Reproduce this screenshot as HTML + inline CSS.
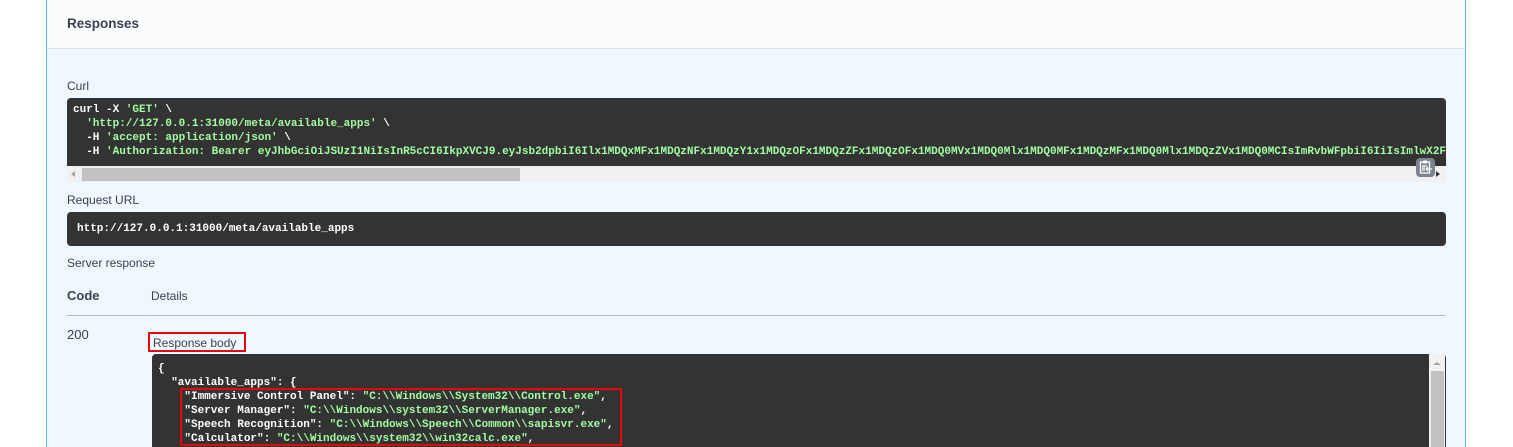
<!DOCTYPE html>
<html><head><meta charset="utf-8"><style>
*{box-sizing:border-box;margin:0;padding:0}
body{width:1513px;height:447px;overflow:hidden;background:#fff;font-family:"Liberation Sans",Arial,sans-serif;color:#3b4151;position:relative}
.panel{position:absolute;left:46px;top:0;width:1420px;height:447px;background:#eff7ff;border-left:1px solid #61affe;border-right:1px solid #61affe}
.hdr{position:absolute;left:0;top:0;right:0;height:49px;background:#fafcfe;border-bottom:1px solid #dde3ea}
.abs{position:absolute}
.lbl{font-size:12px;color:#3b4151}
.code{font-family:"Liberation Mono",monospace;font-size:11px;font-weight:bold;line-height:14px;color:#fff;white-space:pre}
.g{color:#a2fca2}
.dark{background:#333}
</style></head><body>
<div class="panel">
 <div class="hdr"><div class="abs" style="left:20px;top:16px;font-size:13.5px;font-weight:bold;color:#3b4151">Responses</div></div>
 <div class="abs lbl" style="left:20px;top:79px">Curl</div>
 <div class="abs dark" style="left:20px;top:98px;width:1379px;height:68px;border-radius:4px 4px 0 0;overflow:hidden">
  <div class="code abs" style="left:6px;top:5px">curl -X <span class="g">'GET'</span> \
  <span class="g">'http://127.0.0.1:31000/meta/available_apps'</span> \
  -H <span class="g">'accept: application/json'</span> \
  -H <span class="g">'Authorization: Bearer eyJhbGciOiJSUzI1NiIsInR5cCI6IkpXVCJ9.eyJsb2dpbiI6Ilx1MDQxMFx1MDQzNFx1MDQzY1x1MDQzOFx1MDQzZFx1MDQzOFx1MDQ0MVx1MDQ0Mlx1MDQ0MFx1MDQzMFx1MDQ0Mlx1MDQzZVx1MDQ0MCIsImRvbWFpbiI6IiIsImlwX2F'</span></div>
 </div>
 <div class="abs" style="left:20px;top:166px;width:1379px;height:16px;background:#f1f1f1">
  <div class="abs" style="left:4px;top:5px;width:0;height:0;border-top:3px solid transparent;border-bottom:3px solid transparent;border-right:4px solid #a3a3a3"></div>
  <div class="abs" style="left:15px;top:2px;width:438px;height:13px;background:#c1c1c1"></div>
 </div>
 <div class="abs" style="left:1369px;top:158px;width:19px;height:19px;background:#7d8293;border-radius:4px">
  <svg width="19" height="19" viewBox="0 0 19 19"><rect x="4.5" y="4" width="9" height="11" fill="none" stroke="#fff" stroke-width="1.3"/><rect x="7" y="2.5" width="4" height="3" fill="#fff"/><path d="M6 8h5M6 10h3M6 12h3M10 11h6M12 9l-2 2 2 2" stroke="#fff" stroke-width="1.2" fill="none"/></svg>
 </div>
 <div class="abs" style="left:1389px;top:171px;width:0;height:0;border-top:3px solid transparent;border-bottom:3px solid transparent;border-left:4px solid #333"></div>
 <div class="abs lbl" style="left:20px;top:193px">Request URL</div>
 <div class="abs dark" style="left:20px;top:212px;width:1379px;height:34px;border-radius:4px">
  <div class="code abs" style="left:10px;top:10px">http://127.0.0.1:31000/meta/available_apps</div>
 </div>
 <div class="abs lbl" style="left:20px;top:256px">Server response</div>
 <div class="abs" style="left:20px;top:288px;font-size:13px;font-weight:bold">Code</div>
 <div class="abs lbl" style="left:104px;top:289px">Details</div>
 <div class="abs" style="left:20px;top:315px;width:1379px;height:1px;background:#b5b9c1"></div>
 <div class="abs" style="left:20px;top:327px;font-size:13px">200</div>
 <div class="abs lbl" style="left:101px;top:332px;width:98px;height:20px;border:2px solid #e8000b;padding:2px 0 0 3px;font-size:12px">Response body</div>
 <div class="abs dark" style="left:105px;top:354px;width:1294px;height:93px;border-radius:4px 4px 0 0;overflow:hidden">
  <div class="code abs" style="left:6px;top:8px">{
  "available_apps": {
    "Immersive Control Panel": <span class="g">"C:\\Windows\\System32\\Control.exe"</span>,
    "Server Manager": <span class="g">"C:\\Windows\\system32\\ServerManager.exe"</span>,
    "Speech Recognition": <span class="g">"C:\\Windows\\Speech\\Common\\sapisvr.exe"</span>,
    "Calculator": <span class="g">"C:\\Windows\\system32\\win32calc.exe"</span>,</div>
  <div class="abs" style="left:1277px;top:0;width:16px;height:93px;background:#f1f1f1">
   <div class="abs" style="left:4px;top:8px;width:0;height:0;border-left:4px solid transparent;border-right:4px solid transparent;border-bottom:3px solid #a3a3a3"></div>
   <div class="abs" style="left:2px;top:17px;width:13px;height:76px;background:#c1c1c1"></div>
  </div>
 </div>
 <div class="abs" style="left:133px;top:388px;width:442px;height:58px;border:2px solid #e8000b"></div>
</div>
</body></html>
